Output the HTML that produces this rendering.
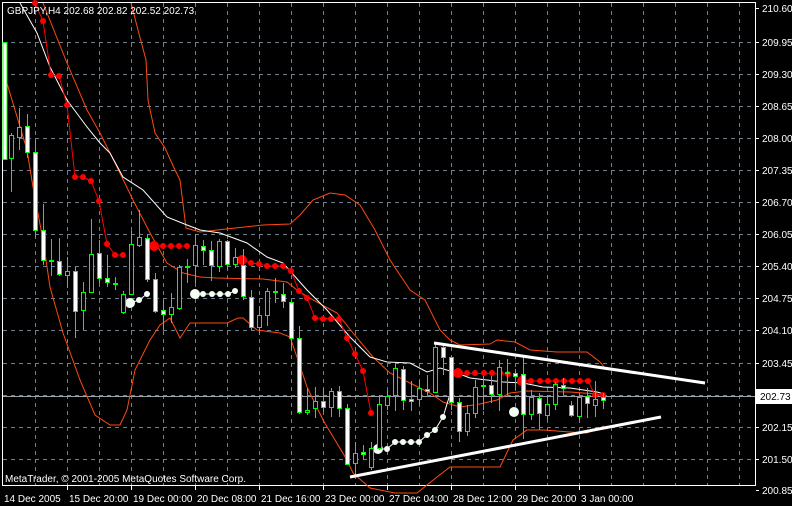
<!DOCTYPE html>
<html><head><meta charset="utf-8"><style>
html,body{margin:0;padding:0;background:#000;width:792px;height:506px;overflow:hidden}
svg{display:block}
text{font-family:"Liberation Sans",sans-serif;font-size:10px;fill:#fff}
</style></head><body>
<svg width="792" height="506" viewBox="0 0 792 506" xmlns="http://www.w3.org/2000/svg">
<rect width="792" height="506" fill="#000"/>
<g stroke="#6f7f90" stroke-width="1" stroke-dasharray="4,4" shape-rendering="crispEdges">
<path d="M35.5 3V485M67.5 3V485M99.5 3V485M131.5 3V485M163.5 3V485M195.5 3V485M227.5 3V485M259.5 3V485M291.5 3V485M323.5 3V485M355.5 3V485M387.5 3V485M419.5 3V485M451.5 3V485M483.5 3V485M515.5 3V485M547.5 3V485M579.5 3V485M611.5 3V485M643.5 3V485M675.5 3V485M707.5 3V485M739.5 3V485"/>
<path d="M3 42.5H755M3 74.5H755M3 106.5H755M3 138.5H755M3 170.5H755M3 202.5H755M3 234.5H755M3 266.5H755M3 298.5H755M3 330.5H755M3 363.5H755M3 395.5H755M3 427.5H755M3 459.5H755"/>
</g>
<path d="M3 396.5H755" stroke="#9aa0a8" stroke-width="1" shape-rendering="crispEdges"/>
<rect x="2.5" y="2.5" width="753" height="483" fill="none" stroke="#fff" stroke-width="1" shape-rendering="crispEdges"/>
<g stroke="#fff" shape-rendering="crispEdges">
<path d="M756 8.5h3M756 42.5h3M756 74.5h3M756 106.5h3M756 138.5h3M756 170.5h3M756 202.5h3M756 234.5h3M756 266.5h3M756 298.5h3M756 330.5h3M756 363.5h3M756 427.5h3M756 459.5h3M756 490.5h3"/>
<path d="M67.5 486v4M131.5 486v4M195.5 486v4M259.5 486v4M323.5 486v4M387.5 486v4M451.5 486v4M515.5 486v4M579.5 486v4"/>
</g>
<g>
<text x="762" y="12">210.60</text><text x="762" y="46">209.95</text><text x="762" y="78">209.30</text>
<text x="762" y="110">208.65</text><text x="762" y="142">208.00</text><text x="762" y="174">207.35</text>
<text x="762" y="206">206.70</text><text x="762" y="238">206.05</text><text x="762" y="270">205.40</text>
<text x="762" y="302">204.75</text><text x="762" y="334">204.10</text><text x="762" y="367">203.45</text>
<text x="762" y="431">202.15</text><text x="762" y="463">201.50</text><text x="762" y="494">200.85</text>
</g>
<rect x="756" y="389" width="36" height="15" fill="#fff"/>
<text x="760" y="400" style="fill:#000">202.73</text>
<g>
<text x="4" y="502">14 Dec 2005</text><text x="69" y="502">15 Dec 20:00</text><text x="133" y="502">19 Dec 00:00</text>
<text x="197" y="502">20 Dec 08:00</text><text x="261" y="502">21 Dec 16:00</text><text x="325" y="502">23 Dec 00:00</text>
<text x="389" y="502">27 Dec 04:00</text><text x="453" y="502">28 Dec 12:00</text><text x="517" y="502">29 Dec 20:00</text>
<text x="581" y="502">3 Jan 00:00</text>
</g>
<g fill="none" stroke="#ff4a10" stroke-width="1">
<polyline points="131,3 138,30 146,60 148,100 155,133 165,148 175,170 180,180 186,228 200,232 217,230 263,225 290,224 300,215 313,200 330,193 345,195 360,205 375,230 390,260 410,290 425,300 440,330 450,340 460,345 490,344 497,340 515,342 530,350 557,352 587,352 600,362 604,367"/>
<polyline points="43,3 67,63 87,110 100,133 117,167 133,200 150,233 167,263 183,273 200,277 217,278 263,279 287,282 297,290 313,300 337,313 353,333 373,357 390,373 410,383 430,393 443,402 460,407 480,404 497,400 510,393 527,391 570,392 597,394 604,396"/>
<polyline points="3,70 15,110 27,150 33,187 43,240 50,287 63,333 80,380 95,415 110,425 120,425 127,410 135,370 150,340 160,325 170,318 180,338 190,323 227,323 238,318 243,318 257,330 280,333 290,337 298,360 307,387 323,420 347,460 353,473 370,488 395,493 417,493 437,477 450,467 500,467 513,440 527,430 543,430 570,432 587,433 600,428 604,426"/>
</g>
<polyline fill="none" stroke="#fff" stroke-width="1" points="20,3 37,33 50,67 67,100 87,127 100,143 110,153 123,177 143,190 167,217 187,225 200,230 220,233 247,243 267,257 283,263 307,290 327,310 350,337 370,357 387,362 410,363 427,372 440,368 457,373 470,378 487,380 503,382 523,383 543,387 570,388 597,392 604,394"/>
<g stroke="#ff0000" stroke-width="1" fill="none">
<polyline points="35,3 43,21 51,75 59,76 67,105 75,177 83,177 91,181 99,201 107,244 115,255 123,255"/>
<polyline points="154,246 187,246"/>
<polyline points="242,260 251,263 259,264 267,266 283,266 291,271 299,291 307,298 315,318 339,319 347,338 355,354 363,371 371,413"/>
<polyline points="458,373 508,374"/>
<polyline points="522,381 588,381 595,395 603,395"/>
</g>
<g fill="#ff0000">
<circle cx="35" cy="3" r="3"/><circle cx="43" cy="21" r="3"/><circle cx="51" cy="75" r="3"/><circle cx="59" cy="76" r="3"/><circle cx="67" cy="105" r="3"/><circle cx="75" cy="177" r="3"/><circle cx="83" cy="177" r="3"/><circle cx="91" cy="181" r="3"/><circle cx="99" cy="201" r="3"/><circle cx="107" cy="244" r="3"/><circle cx="115" cy="255" r="3"/><circle cx="123" cy="255" r="3"/>
<circle cx="154" cy="246" r="5"/><circle cx="163" cy="246" r="3"/><circle cx="171" cy="246" r="3"/><circle cx="179" cy="246" r="3"/><circle cx="187" cy="246" r="3"/>
<circle cx="242" cy="260" r="5"/><circle cx="251" cy="263" r="3"/><circle cx="259" cy="264" r="3"/><circle cx="267" cy="266" r="3"/><circle cx="275" cy="266" r="3"/><circle cx="283" cy="266" r="3"/><circle cx="291" cy="271" r="3"/><circle cx="299" cy="291" r="3"/><circle cx="307" cy="298" r="3"/><circle cx="315" cy="318" r="3"/><circle cx="323" cy="319" r="3"/><circle cx="331" cy="319" r="3"/><circle cx="339" cy="319" r="3"/><circle cx="347" cy="338" r="3"/><circle cx="355" cy="354" r="3"/><circle cx="363" cy="371" r="3"/><circle cx="371" cy="413" r="3"/>
<circle cx="458" cy="373" r="5"/><circle cx="467" cy="373" r="3"/><circle cx="475" cy="373" r="3"/><circle cx="484" cy="373" r="3"/><circle cx="492" cy="373" r="3"/><circle cx="500" cy="373" r="3"/><circle cx="508" cy="374" r="3"/>
<circle cx="522" cy="381" r="5"/><circle cx="531" cy="381" r="3"/><circle cx="540" cy="381" r="3"/><circle cx="548" cy="381" r="3"/><circle cx="556" cy="381" r="3"/><circle cx="564" cy="381" r="3"/><circle cx="572" cy="381" r="3"/><circle cx="580" cy="381" r="3"/><circle cx="588" cy="381" r="3"/><circle cx="595" cy="395" r="3"/><circle cx="603" cy="395" r="3"/>
</g>
<g stroke="#fff" fill="none"><polyline points="130,303 139,300 147,294"/><polyline points="195,294 228,294 235,291"/><polyline points="378,449 387,449 395,442 419,442 427,435 435,430 443,417 451,391"/></g>
<g fill="#f4fff4">
<circle cx="130" cy="303" r="5"/><circle cx="139" cy="300" r="3"/><circle cx="147" cy="294" r="3"/>
<circle cx="195" cy="294" r="5"/><circle cx="203" cy="294" r="3"/><circle cx="212" cy="294" r="3"/><circle cx="220" cy="294" r="3"/><circle cx="228" cy="294" r="3"/><circle cx="235" cy="291" r="3"/>
<circle cx="378" cy="449" r="5"/><circle cx="387" cy="449" r="3"/><circle cx="395" cy="442" r="3"/><circle cx="403" cy="442" r="3"/><circle cx="411" cy="442" r="3"/><circle cx="419" cy="442" r="3"/><circle cx="427" cy="435" r="3"/><circle cx="435" cy="430" r="3"/><circle cx="443" cy="417" r="3"/>
<circle cx="514" cy="412" r="5"/>
</g>
<path stroke="#00ff00" stroke-width="1" fill="none" shape-rendering="crispEdges" d="M11.5 133V192M19.5 108V150M27.5 114V158M35.5 140V237M43.5 204V265M51.5 239V276M59.5 238V276M67.5 257V288M75.5 267V338M83.5 282V330M91.5 219V293M99.5 240V283M107.5 255V287M115.5 277V290M123.5 291V314M131.5 231V295M139.5 210V247M147.5 234V282M155.5 273V313M163.5 300V330M171.5 293V323M179.5 265V310M187.5 259V283M195.5 234V283M203.5 240V265M211.5 241V281M219.5 239V272M227.5 240V270M235.5 248V268M243.5 249V300M251.5 290V330M259.5 306V333M267.5 288V326M275.5 278V303M283.5 283V308M291.5 300V349M299.5 326V414M307.5 388V415M315.5 387V418M323.5 388V412M331.5 388V417M339.5 386V417M347.5 404V465M355.5 442V476M363.5 445V460M371.5 442V470M379.5 395V450M387.5 390V410M395.5 363V411M403.5 366V410M411.5 381V411M419.5 380V405M427.5 375V395M435.5 342V393M443.5 345V375M451.5 356V410M459.5 398V442M467.5 405V436M475.5 380V418M483.5 376V410M491.5 376V403M499.5 360V411M507.5 359V395M515.5 369V390M523.5 355V439M531.5 390V420M539.5 393V430M547.5 395V420M555.5 382V410M563.5 378V395M571.5 401V417M579.5 393V421M587.5 388V418M595.5 381V417M603.5 393V409"/>
<g stroke="#00ff00" stroke-width="1" shape-rendering="crispEdges">
<rect x="3" y="42.5" width="4" height="117" fill="#fff"/>
<rect x="9.5" y="135.5" width="4" height="23" fill="#000"/>
<rect x="17.5" y="127.5" width="4" height="10" fill="#000"/>
<rect x="25.5" y="126.5" width="4" height="26" fill="#fff"/>
<rect x="33.5" y="152.5" width="4" height="78" fill="#fff"/>
<rect x="41.5" y="230.5" width="4" height="30" fill="#fff"/>
<rect x="49.5" y="260.5" width="4" height="1" fill="#000"/>
<rect x="57.5" y="261.5" width="4" height="13" fill="#fff"/>
<rect x="65.5" y="271.5" width="4" height="4" fill="#000"/>
<rect x="73.5" y="271.5" width="4" height="40" fill="#fff"/>
<rect x="81.5" y="292.5" width="4" height="18" fill="#000"/>
<rect x="89.5" y="254.5" width="4" height="38" fill="#000"/>
<rect x="97.5" y="253.5" width="4" height="25" fill="#fff"/>
<rect x="105.5" y="278.5" width="4" height="4" fill="#fff"/>
<rect x="113.5" y="283.5" width="4" height="1" fill="#000"/>
<rect x="121.5" y="294.5" width="4" height="18" fill="#000"/>
<rect x="129.5" y="244.5" width="4" height="50" fill="#000"/>
<rect x="137.5" y="237.5" width="4" height="8" fill="#000"/>
<rect x="145.5" y="238.5" width="4" height="41" fill="#fff"/>
<rect x="153.5" y="279.5" width="4" height="32" fill="#fff"/>
<rect x="161.5" y="310.5" width="4" height="4" fill="#fff"/>
<rect x="169.5" y="307.5" width="4" height="7" fill="#000"/>
<rect x="177.5" y="267.5" width="4" height="41" fill="#000"/>
<rect x="185.5" y="266.5" width="4" height="1" fill="#000"/>
<rect x="193.5" y="245.5" width="4" height="20" fill="#000"/>
<rect x="201.5" y="246.5" width="4" height="4" fill="#fff"/>
<rect x="209.5" y="250.5" width="4" height="15" fill="#fff"/>
<rect x="217.5" y="241.5" width="4" height="25" fill="#000"/>
<rect x="225.5" y="241.5" width="4" height="23" fill="#fff"/>
<rect x="233.5" y="257.5" width="4" height="7" fill="#000"/>
<rect x="241.5" y="265.5" width="4" height="31" fill="#fff"/>
<rect x="249.5" y="297.5" width="4" height="30" fill="#fff"/>
<rect x="257.5" y="315.5" width="4" height="12" fill="#000"/>
<rect x="265.5" y="291.5" width="4" height="24" fill="#000"/>
<rect x="273.5" y="291.5" width="4" height="1" fill="#000"/>
<rect x="281.5" y="294.5" width="4" height="7" fill="#fff"/>
<rect x="289.5" y="302.5" width="4" height="36" fill="#fff"/>
<rect x="297.5" y="338.5" width="4" height="74" fill="#fff"/>
<rect x="305.5" y="410.5" width="4" height="2" fill="#000"/>
<rect x="313.5" y="401.5" width="4" height="7" fill="#000"/>
<rect x="321.5" y="401.5" width="4" height="6" fill="#fff"/>
<rect x="329.5" y="391.5" width="4" height="16" fill="#000"/>
<rect x="337.5" y="391.5" width="4" height="17" fill="#fff"/>
<rect x="345.5" y="408.5" width="4" height="56" fill="#fff"/>
<rect x="353.5" y="453.5" width="4" height="10" fill="#000"/>
<rect x="361.5" y="452.5" width="4" height="2" fill="#fff"/>
<rect x="369.5" y="448.5" width="4" height="19" fill="#000"/>
<rect x="377.5" y="404.5" width="4" height="44" fill="#000"/>
<rect x="385.5" y="396.5" width="4" height="9" fill="#000"/>
<rect x="393.5" y="368.5" width="4" height="27" fill="#000"/>
<rect x="401.5" y="369.5" width="4" height="31" fill="#fff"/>
<rect x="409.5" y="399.5" width="4" height="2" fill="#fff"/>
<rect x="417.5" y="388.5" width="4" height="11" fill="#000"/>
<rect x="425.5" y="389.5" width="4" height="2" fill="#fff"/>
<rect x="433.5" y="347.5" width="4" height="45" fill="#000"/>
<rect x="441.5" y="347.5" width="4" height="10" fill="#fff"/>
<rect x="449.5" y="357.5" width="4" height="45" fill="#fff"/>
<rect x="457.5" y="402.5" width="4" height="29" fill="#fff"/>
<rect x="465.5" y="413.5" width="4" height="18" fill="#000"/>
<rect x="473.5" y="387.5" width="4" height="26" fill="#000"/>
<rect x="481.5" y="385.5" width="4" height="1" fill="#000"/>
<rect x="489.5" y="385.5" width="4" height="9" fill="#fff"/>
<rect x="497.5" y="367.5" width="4" height="27" fill="#000"/>
<rect x="505.5" y="372.5" width="4" height="1" fill="#000"/>
<rect x="513.5" y="373.5" width="4" height="3" fill="#fff"/>
<rect x="521.5" y="374.5" width="4" height="40" fill="#fff"/>
<rect x="529.5" y="397.5" width="4" height="17" fill="#000"/>
<rect x="537.5" y="398.5" width="4" height="15" fill="#fff"/>
<rect x="545.5" y="404.5" width="4" height="11" fill="#000"/>
<rect x="553.5" y="384.5" width="4" height="20" fill="#000"/>
<rect x="561.5" y="385.5" width="4" height="3" fill="#fff"/>
<rect x="569.5" y="405.5" width="4" height="10" fill="#fff"/>
<rect x="577.5" y="397.5" width="4" height="19" fill="#000"/>
<rect x="585.5" y="396.5" width="4" height="7" fill="#fff"/>
<rect x="593.5" y="399.5" width="4" height="6" fill="#000"/>
<rect x="601.5" y="397.5" width="4" height="3" fill="#fff"/>
</g>
<g stroke="#fff" stroke-width="3">
<line x1="434" y1="343" x2="705" y2="383"/>
<line x1="350" y1="477" x2="661" y2="417"/>
</g>
<text x="7" y="14">GBPJPY,H4  202.68 202.82 202.52 202.73</text>
<text x="5" y="482">MetaTrader, © 2001-2005 MetaQuotes Software Corp.</text>
</svg>
</body></html>
